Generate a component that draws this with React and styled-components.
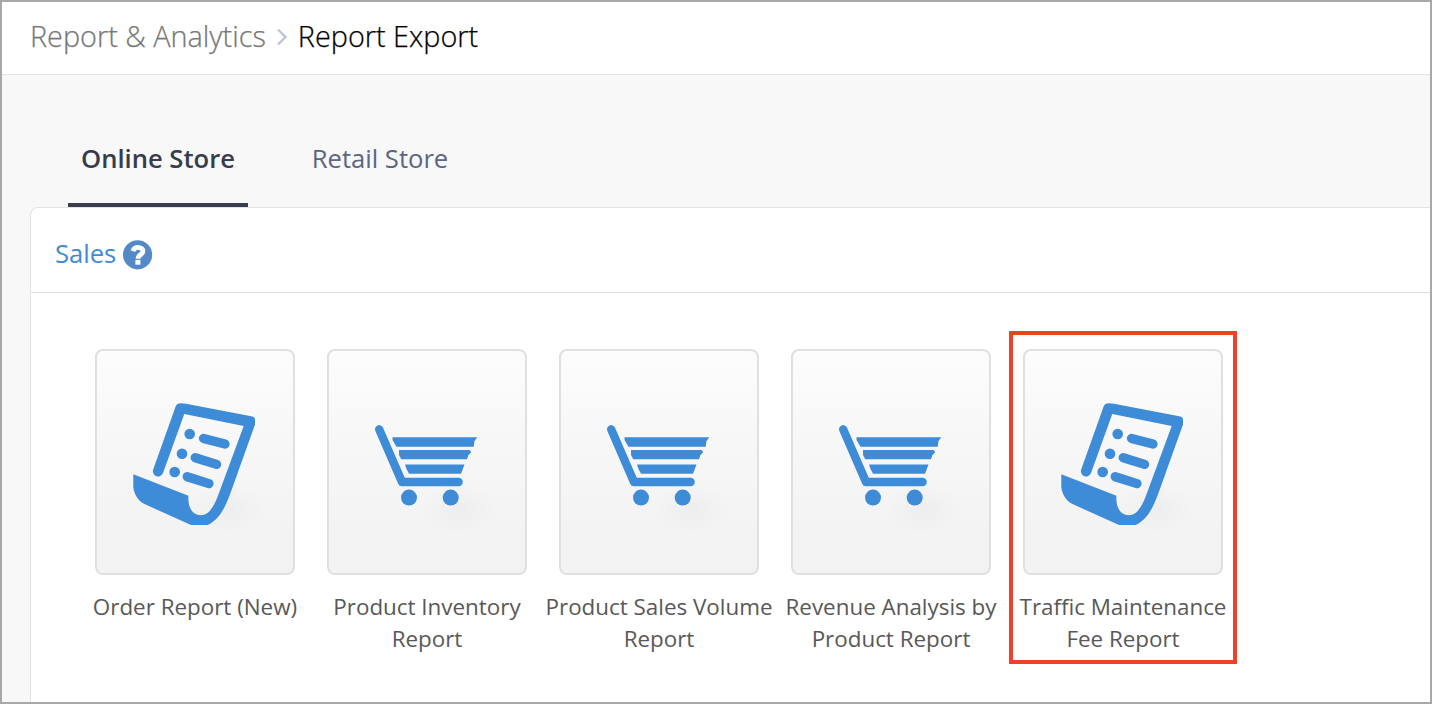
import React from "react";
import styled, { createGlobalStyle } from "styled-components";

const GlobalStyle = createGlobalStyle`
  * {
    box-sizing: border-box;
  }

  body {
    margin: 0;
    font-family: "Open Sans", sans-serif;
    overflow: hidden;
  }
`;

const Page = styled.div`
  width: 100vw;
  height: 100vh;
  display: flex;
  flex-direction: column;
  border: 2px solid #a8a8a8;
  background-color: #f8f8f8;
  overflow: hidden;
`;

const Header = styled.header`
  height: 73px;
  flex: none;
  display: flex;
  align-items: flex-start;
  padding: 14px 0 0 28px;
  border-bottom: 1px solid #e5e5e5;
  background-color: #fff;
`;

const Crumb = styled.span`
  font-size: 28.8px;
  font-weight: 300;
  line-height: 40px;
  white-space: nowrap;
  color: ${(props) => (props.$current ? "#000" : "#777")};
  -webkit-text-stroke: 0.25px currentColor;
`;

const Chevron = styled.svg`
  width: 12px;
  height: 18px;
  flex: none;
  margin: 12px 10px 0;
`;

const Tabs = styled.nav`
  display: flex;
  flex: none;
  gap: 51px;
  padding: 45px 0 0 66px;
`;

const Tab = styled.a`
  height: 87px;
  width: ${(props) => props.$width};
  padding-top: 19px;
  font-size: 25.6px;
  font-weight: ${(props) => (props.$active ? 600 : 400)};
  line-height: 40px;
  text-align: center;
  white-space: nowrap;
  color: ${(props) => (props.$active ? "#363c4e" : "#5c6582")};
  border-bottom: 4px solid ${(props) => (props.$active ? "#3a3d4f" : "transparent")};
`;

const Panel = styled.section`
  flex: 1;
  margin-left: 28px;
  border: 1px solid #e3e3e3;
  border-right: 0;
  border-bottom: 0;
  border-top-left-radius: 8px;
  background-color: #fff;
`;

const PanelHeader = styled.div`
  height: 85px;
  display: flex;
  align-items: center;
  gap: 7px;
  padding: 10px 0 0 24px;
  border-bottom: 1px solid #ddd;
`;

const PanelTitle = styled.h2`
  margin: -2px 0 0;
  font-size: 25.6px;
  font-weight: 400;
  line-height: 36px;
  color: #3e8cd8;
`;

const HelpIcon = styled.svg`
  width: 30px;
  height: 30px;
`;

const Reports = styled.div`
  display: flex;
  gap: 4px;
  padding: 38px 0 0 50px;
`;

const Report = styled.a`
  width: 228px;
  height: 333px;
  display: flex;
  flex-direction: column;
  align-items: center;
  padding-top: 14px;
  border: 4px solid ${(props) => (props.$highlighted ? "#ee4128" : "transparent")};
`;

const Tile = styled.div`
  width: 200px;
  height: 226px;
  flex: none;
  border: 2px solid #e0e0e0;
  border-radius: 8px;
  background: linear-gradient(#fcfcfc, #f3f3f3 80%);
`;

const TileArt = styled.svg`
  display: block;
  width: 200px;
  height: 226px;
  margin: -2px;
`;

const Label = styled.span`
  margin-top: 16px;
  font-size: 22.4px;
  line-height: 32px;
  text-align: center;
  white-space: pre;
  color: #585858;
`;

const Shadow = ({ id }) => (
  <>
    <defs>
      <radialGradient id={id}>
        <stop offset="0" stopColor="#000" stopOpacity="0.025" />
        <stop offset="1" stopColor="#000" stopOpacity="0" />
      </radialGradient>
    </defs>
    <ellipse cx="132" cy="160" rx="42" ry="26" fill={`url(#${id})`} />
  </>
);

const ReceiptArt = ({ id }) => (
  <TileArt viewBox="0 0 200 226">
    <Shadow id={id} />
    <g fill="#3e8cd8">
      <path d="M58.2 120.5L80.8 57Q82 54.3 85 54.3L91 54.7L157.5 67.5Q160 68 160 70.5V75.5L135.5 144C130 159 124 171 112.5 176H96L50 155.3C42 151.5 38.3 143 38.3 137V125.3L93.4 146.7C92.7 158 97 166.2 106 166.2C114 166.2 119 157 122.7 147.5L148.7 77L89.3 65L68 124A5.1 5.1 0 0 1 58.2 120.5Z" />
      <circle cx="94.7" cy="85" r="5.3" />
      <circle cx="87" cy="104.7" r="5.3" />
      <circle cx="79.7" cy="123" r="5.3" />
    </g>
    <path
      d="M108.5 89.4L130 95M100.2 108.7L121.6 115.4M92.2 127.7L114 134.6"
      stroke="#3e8cd8"
      strokeWidth="9.3"
      strokeLinecap="round"
    />
  </TileArt>
);

const CartArt = ({ id }) => (
  <TileArt viewBox="0 0 200 226">
    <Shadow id={id} />
    <path
      d="M52.2 80.3L75 133H131.6"
      fill="none"
      stroke="#3e8cd8"
      strokeWidth="8.4"
      strokeLinecap="round"
      strokeLinejoin="round"
    />
    <g fill="#3e8cd8">
      <path d="M65.5 88.3H150.3L147.5 92L146.7 97.7H69.5L65.5 91Z" />
      <path d="M72 101H143L144 103.5L141.5 106L140 110.3H74.2L72 106Z" />
      <path d="M78 115.5H137.5L134 124.7H82L79.5 120Z" />
      <circle cx="82" cy="148.6" r="8" />
      <circle cx="123.7" cy="148.6" r="8" />
    </g>
  </TileArt>
);

const reports = [
  { label: "Order Report (New)", Art: ReceiptArt },
  { label: "Product Inventory\nReport", Art: CartArt },
  { label: "Product Sales Volume\nReport", Art: CartArt },
  { label: "Revenue Analysis by\nProduct Report", Art: CartArt },
  { label: "Traffic Maintenance\nFee Report", Art: ReceiptArt, highlighted: true },
];

const App = () => {
  return (
    <>
      <GlobalStyle />
      <Page>
        <Header>
          <Crumb>Report &amp; Analytics</Crumb>
          <Chevron viewBox="0 0 12 18">
            <path d="M2 1.5L9.5 9L2 16.5" fill="none" stroke="#bcc3d6" strokeWidth="2.2" />
          </Chevron>
          <Crumb $current>Report Export</Crumb>
        </Header>

        <Tabs>
          <Tab $active $width="180px">Online Store</Tab>
          <Tab $width="162px">Retail Store</Tab>
        </Tabs>

        <Panel>
          <PanelHeader>
            <PanelTitle>Sales</PanelTitle>
            <HelpIcon viewBox="0 0 30 30">
              <circle cx="14.6" cy="14.8" r="14.6" fill="#5489c7" />
              <path
                d="M9.8 11.2C10.8 8.6 12.5 7.3 15 7.3C17.8 7.3 19.9 8.8 19.9 11.2C19.9 14.8 14.9 14.8 14.9 18.8"
                fill="none"
                stroke="#fff"
                strokeWidth="4.8"
              />
              <rect x="12.4" y="19.9" width="5" height="4.8" fill="#fff" />
            </HelpIcon>
          </PanelHeader>

          <Reports>
            {reports.map(({ label, Art, highlighted }, index) => (
              <Report key={label} $highlighted={highlighted}>
                <Tile>
                  <Art id={`shadow-${index}`} />
                </Tile>
                <Label>{label}</Label>
              </Report>
            ))}
          </Reports>
        </Panel>
      </Page>
    </>
  );
};

export default App;
